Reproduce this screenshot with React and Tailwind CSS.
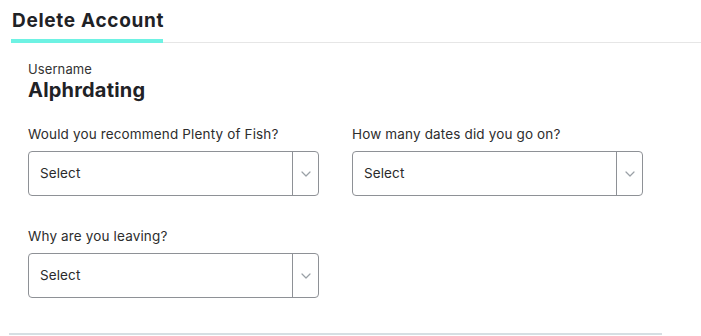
import React from "react";

function Chevron() {
  return (
    <svg width="10" height="6" viewBox="0 0 10 6" fill="none">
      <polyline points="1,1 5,5 9,1" stroke="#9aa0a6" strokeWidth="1.2" strokeLinecap="round" strokeLinejoin="round" />
    </svg>
  );
}

function SelectBox() {
  return (
    <div className="flex h-[45px] w-[291px] items-stretch rounded-[4px] border border-[#8e9196] bg-white">
      <div className="flex flex-1 items-center pl-[11px] text-[13.5px] tracking-[0.1px] text-[#2a2a2a]">Select</div>
      <div className="flex w-[26px] items-center justify-center border-l border-[#8e9196]">
        <Chevron />
      </div>
    </div>
  );
}

function Field({ label }) {
  return (
    <div className="flex flex-col">
      <div className="mb-[8px] text-[13.5px] leading-[18px] tracking-[0.15px] text-[#2d2d2d]">{label}</div>
      <SelectBox />
    </div>
  );
}

export default function App() {
  return (
    <div className="h-[336px] w-[701px] overflow-hidden bg-white" style={{ fontFamily: "Inter, 'Noto Sans', sans-serif" }}>
      <div className="flex items-end pl-[11px] pt-[8px]">
        <div className="w-[152px] border-b-[4px] border-[#6ef2e3] pb-[6px] pl-[1px]">
          <div className="whitespace-nowrap text-[19px] font-bold leading-[25px] tracking-[0.7px] text-[#1f2226]">Delete Account</div>
        </div>
        <div className="flex-1 border-b border-[#e6e6e6]" />
      </div>
      <div className="pl-[28px] pt-[18px]">
        <div className="text-[13px] leading-[16px] tracking-[0.1px] text-[#333]">Username</div>
        <div className="text-[20px] font-bold leading-[26px] tracking-[0.2px] text-[#1f2226]">Alphrdating</div>
        <div className="mt-[22px] grid grid-cols-[291px_291px] gap-x-[33px] gap-y-[31px]">
          <Field label="Would you recommend Plenty of Fish?" />
          <Field label="How many dates did you go on?" />
          <Field label="Why are you leaving?" />
        </div>
      </div>
      <div className="ml-[9px] mt-[35px] w-[653px] border-b-2 border-[#d6dfe3]" />
    </div>
  );
}
